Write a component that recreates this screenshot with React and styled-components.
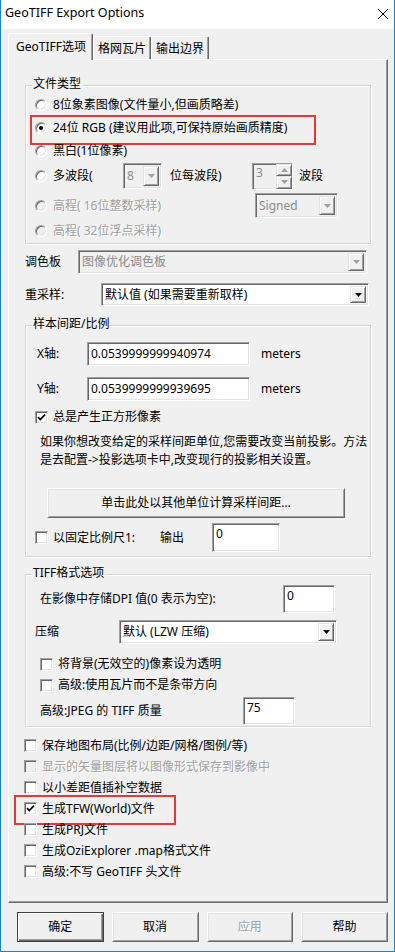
import React from 'react';
import styled, { createGlobalStyle, css } from 'styled-components';

const GlobalStyle = createGlobalStyle`
  html, body { margin: 0; padding: 0; }
  body {
    font-family: "Noto Sans", "Noto Sans CJK SC", sans-serif;
    font-size: 12px;
    color: #000;
    background: #fff;
  }
  * { box-sizing: border-box; }
`;

const sunken = css`
  border: 1px solid;
  border-color: #a0a0a0 #fff #fff #a0a0a0;
  box-shadow: inset 1px 1px 0 #696969, inset -1px -1px 0 #e3e3e3;
`;

const Window = styled.div`
  width: 395px;
  height: 952px;
  display: flex;
  flex-direction: column;
  border: 1px solid #1883d7;
  border-top: none;
  background: #f0f0f0;
`;

const TitleBar = styled.div`
  height: 29px;
  flex: none;
  background: #fff;
  display: flex;
  align-items: flex-start;
  justify-content: space-between;
  padding: 5px 5px 0 4px;
`;

const TitleText = styled.div`
  font-size: 12.5px;
  line-height: 16px;
`;

const CloseIcon = styled.svg`
  margin-top: 3px;
`;

const Body = styled.div`
  flex: 1;
  display: flex;
  flex-direction: column;
  padding: 0 6px 0 7px;
`;

const TabStrip = styled.div`
  height: 30px;
  flex: none;
  display: flex;
  align-items: flex-end;
`;

const Tab = styled.div`
  height: ${p => (p.$active ? 27 : 23)}px;
  padding: ${p => (p.$active ? '0 6px 0 7px' : '2px 4px 0 4px')};
  display: flex;
  align-items: center;
  line-height: 16px;
  background: #f0f0f0;
  border-top: 1px solid #fff;
  border-left: 1px solid #fff;
  border-right: 1px solid #696969;
  box-shadow: inset -1px 0 0 #a0a0a0;
  border-radius: 2px 2px 0 0;
  position: relative;
  z-index: ${p => (p.$active ? 1 : 0)};
  margin-bottom: ${p => (p.$active ? -1 : 0)}px;
`;

const TabPanel = styled.div`
  height: 844px;
  flex: none;
  display: flex;
  flex-direction: column;
  padding: 0 16px;
  border-top: 1px solid #fff;
  border-left: 1px solid #fff;
  border-right: 1px solid #696969;
  border-bottom: 1px solid #696969;
  box-shadow: inset -1px -1px 0 #a0a0a0;
`;

const GroupBox = styled.div`
  position: relative;
  flex: none;
  display: flex;
  flex-direction: column;
  margin-top: ${p => p.$mt}px;
  height: ${p => p.$h}px;
  padding: ${p => p.$pt}px 0 0 9px;
  border: 1px solid #d5d5d5;
  box-shadow: inset 1px 1px 0 #fff, 1px 1px 0 #fff;
`;

const GroupTitle = styled.span`
  position: absolute;
  top: -10px;
  left: 6px;
  padding: 0 1px;
  line-height: 16px;
  background: #f0f0f0;
`;

const Row = styled.div`
  position: relative;
  flex: none;
  display: flex;
  align-items: center;
  height: ${p => p.$h || 20}px;
  margin-top: ${p => p.$mt || 0}px;
  margin-left: ${p => p.$ml || 0}px;
  ${p =>
    p.$mark &&
    css`
      &::after {
        content: '';
        position: absolute;
        border: 2px solid #e5383b;
        pointer-events: none;
        ${p.$mark}
      }
    `}
`;

const Label = styled.span`
  flex: none;
  width: ${p => (p.$w ? `${p.$w}px` : 'auto')};
  margin-left: ${p => p.$ml || 0}px;
  line-height: 16px;
  white-space: nowrap;
  color: ${p => (p.$disabled ? '#a0a0a0' : '#000')};
  text-shadow: ${p => (p.$disabled ? '1px 1px 0 #fff' : 'none')};
`;

const RadioMark = styled.span`
  flex: none;
  width: 12px;
  height: 12px;
  margin-right: 6px;
  border-radius: 50%;
  border: 1px solid;
  border-color: #a0a0a0 #fff #fff #a0a0a0;
  box-shadow: inset 1px 1px 0 #696969, inset -1px -1px 0 #e3e3e3;
  background: ${p => (p.$disabled ? '#f0f0f0' : '#fff')};
  display: flex;
  align-items: center;
  justify-content: center;
  &::after {
    content: '';
    display: ${p => (p.$checked ? 'block' : 'none')};
    width: 4px;
    height: 4px;
    border-radius: 50%;
    background: #000;
  }
`;

const CheckMark = styled.span`
  flex: none;
  width: 13px;
  height: 13px;
  margin-right: 5px;
  ${sunken};
  background: ${p => (p.$disabled ? '#f0f0f0' : '#fff')};
  display: flex;
  align-items: center;
  justify-content: center;
`;

const Check = ({ checked, disabled }) => (
  <CheckMark $disabled={disabled}>
    {checked && (
      <svg width="9" height="9" viewBox="0 0 9 9">
        <polyline points="1,4.2 3.3,6.6 8,1.6" fill="none" stroke="#000" strokeWidth="1.7" />
      </svg>
    )}
  </CheckMark>
);

const TextBox = styled.div`
  flex: none;
  width: ${p => p.$w}px;
  height: ${p => p.$h}px;
  margin-left: ${p => p.$ml || 0}px;
  ${sunken};
  background: #fff;
  display: flex;
  align-items: ${p => (p.$top ? 'flex-start' : 'center')};
  padding: ${p => (p.$top ? '2px 3px 0' : '0 3px')};
  line-height: 16px;
  white-space: nowrap;
`;

const ComboBox = styled.div`
  flex: none;
  width: ${p => p.$w}px;
  height: ${p => p.$h}px;
  margin-left: ${p => p.$ml || 0}px;
  ${sunken};
  background: ${p => (p.$disabled ? '#f0f0f0' : '#fff')};
  display: flex;
  padding: 2px;
`;

const ComboText = styled.span`
  flex: 1;
  display: flex;
  align-items: center;
  padding-left: 1px;
  line-height: 16px;
  white-space: nowrap;
  overflow: hidden;
  color: ${p => (p.$disabled ? '#8c8c8c' : '#000')};
`;

const DropButton = styled.span`
  flex: none;
  width: ${p => p.$w || 16}px;
  border: 1px solid;
  border-color: #e3e3e3 #696969 #696969 #e3e3e3;
  box-shadow: inset 1px 1px 0 #fff, inset -1px -1px 0 #a0a0a0;
  background: #f0f0f0;
  display: flex;
  align-items: center;
  justify-content: center;
`;

const Triangle = ({ color = '#000', up }) => (
  <svg width="7" height="4" viewBox="0 0 7 4">
    <polygon points={up ? '0,4 7,4 3.5,0' : '0,0 7,0 3.5,4'} fill={color} />
  </svg>
);

const Combo = ({ w, h, ml, disabled, children }) => (
  <ComboBox $w={w} $h={h} $ml={ml} $disabled={disabled}>
    <ComboText $disabled={disabled}>{children}</ComboText>
    <DropButton>
      <Triangle color={disabled ? '#a0a0a0' : '#000'} />
    </DropButton>
  </ComboBox>
);

const SpinBox = styled.div`
  flex: none;
  width: 41px;
  height: 27px;
  display: flex;
  ${sunken};
  background: #f0f0f0;
`;

const SpinText = styled.span`
  flex: 1;
  padding: 1px 0 0 3px;
  line-height: 16px;
  color: #8c8c8c;
`;

const SpinButtons = styled.span`
  flex: none;
  width: 16px;
  display: flex;
  flex-direction: column;
`;

const SpinButton = styled(DropButton)`
  flex: 1;
  width: auto;
`;

const PushButton = styled.div`
  flex: none;
  height: 30px;
  width: ${p => (p.$w ? `${p.$w}px` : 'auto')};
  margin-top: ${p => p.$mt || 0}px;
  margin-left: ${p => p.$ml || 0}px;
  display: flex;
  align-items: center;
  justify-content: center;
  line-height: 16px;
  background: #f0f0f0;
  color: ${p => (p.$disabled ? '#a0a0a0' : '#000')};
  text-shadow: ${p => (p.$disabled ? '1px 1px 0 #fff' : 'none')};
  border: 1px solid;
  border-color: ${p => (p.$default ? '#404040' : '#fff #696969 #696969 #fff')};
  box-shadow: ${p =>
    p.$default
      ? 'inset 1px 1px 0 #fff, inset -1px -1px 0 #696969, inset -2px -2px 0 #a0a0a0'
      : 'inset 1px 1px 0 #e3e3e3, inset -1px -1px 0 #a0a0a0'};
`;

const Note = styled.p`
  margin: 6px 0 0 5px;
  line-height: 18px;
  white-space: nowrap;
`;

const CheckList = styled.div`
  display: flex;
  flex-direction: column;
  margin-top: 8px;
  margin-left: -1px;
`;

const ButtonRow = styled.div`
  flex: none;
  display: grid;
  grid-template-columns: repeat(4, 1fr);
  gap: 8px;
  margin-top: 9px;
  padding-left: 9px;
`;

const Radio = ({ checked, disabled, children, ...rest }) => (
  <Row {...rest}>
    <RadioMark $checked={checked} $disabled={disabled} />
    <Label $disabled={disabled}>{children}</Label>
  </Row>
);

const CheckRow = ({ checked, disabled, children, ...rest }) => (
  <Row $h={21} {...rest}>
    <Check checked={checked} disabled={disabled} />
    <Label $disabled={disabled}>{children}</Label>
  </Row>
);

export default function App() {
  return (
    <>
      <GlobalStyle />
      <Window>
        <TitleBar>
          <TitleText>GeoTIFF Export Options</TitleText>
          <CloseIcon width="12" height="12" viewBox="0 0 12 12">
            <path d="M1 1 L11 11 M11 1 L1 11" stroke="#000" strokeWidth="1" fill="none" />
          </CloseIcon>
        </TitleBar>
        <Body>
          <TabStrip>
            <Tab $active>GeoTIFF选项</Tab>
            <Tab>格网瓦片</Tab>
            <Tab>输出边界</Tab>
          </TabStrip>
          <TabPanel>
            <GroupBox $mt={25} $h={159} $pt={8}>
              <GroupTitle>文件类型</GroupTitle>
              <Radio $h={22}>8位象素图像(文件量小,但画质略差)</Radio>
              <Radio $h={23} checked $mark="top:-1px;left:-5px;width:282px;height:26px;">
                24位 RGB (建议用此项,可保持原始画质精度)
              </Radio>
              <Radio $h={23}>黑白(1位像素)</Radio>
              <Row $h={28}>
                <RadioMark />
                <Label $w={70}>多波段(</Label>
                <Combo w={39} h={26} disabled>8</Combo>
                <Label $w={82} $ml={8}>位每波段)</Label>
                <SpinBox>
                  <SpinText>3</SpinText>
                  <SpinButtons>
                    <SpinButton><Triangle color="#a0a0a0" up /></SpinButton>
                    <SpinButton><Triangle color="#a0a0a0" /></SpinButton>
                  </SpinButtons>
                </SpinBox>
                <Label $ml={6}>波段</Label>
              </Row>
              <Row $h={31}>
                <RadioMark $disabled />
                <Label $w={202} $disabled>高程( 16位整数采样)</Label>
                <Combo w={83} h={25} disabled>Signed</Combo>
              </Row>
              <Radio $h={20} disabled>高程( 32位浮点采样)</Radio>
            </GroupBox>

            <Row $h={24} $mt={6}>
              <Label $w={53}>调色板</Label>
              <Combo w={289} h={24} disabled>图像优化调色板</Combo>
            </Row>
            <Row $h={23} $mt={9}>
              <Label $w={76}>重采样:</Label>
              <Combo w={268} h={23}>默认值 (如果需要重新取样)</Combo>
            </Row>

            <GroupBox $mt={19} $h={232} $pt={16}>
              <GroupTitle>样本间距/比例</GroupTitle>
              <Row $h={24}>
                <Label $w={50} $ml={2}>X轴:</Label>
                <TextBox $w={163} $h={24}>0.0539999999940974</TextBox>
                <Label $ml={11}>meters</Label>
              </Row>
              <Row $h={24} $mt={11}>
                <Label $w={50} $ml={2}>Y轴:</Label>
                <TextBox $w={163} $h={24}>0.0539999999939695</TextBox>
                <Label $ml={11}>meters</Label>
              </Row>
              <Row $h={20} $mt={6}>
                <Check checked />
                <Label>总是产生正方形像素</Label>
              </Row>
              <Note>
                如果你想改变给定的采样间距单位,您需要改变当前投影。方法
                <br />
                是去配置-&gt;投影选项卡中,改变现行的投影相关设置。
              </Note>
              <PushButton $w={298} $mt={19} $ml={12}>单击此处以其他单位计算采样间距...</PushButton>
              <Row $h={29} $mt={5}>
                <Check />
                <Label $w={107}>以固定比例尺1:</Label>
                <Label $w={52}>输出</Label>
                <TextBox $w={68} $h={29} $top>0</TextBox>
              </Row>
            </GroupBox>

            <GroupBox $mt={17} $h={153} $pt={10}>
              <GroupTitle>TIFF格式选项</GroupTitle>
              <Row $h={28}>
                <Label $w={243} $ml={5}>在影像中存储DPI 值(0 表示为空):</Label>
                <TextBox $w={52} $h={28} $top>0</TextBox>
              </Row>
              <Row $h={24} $mt={7}>
                <Label $w={84}>压缩</Label>
                <Combo w={218} h={24}>默认 (LZW 压缩)</Combo>
              </Row>
              <Row $h={20} $mt={10} $ml={5}>
                <Check />
                <Label>将背景(无效空的)像素设为透明</Label>
              </Row>
              <Row $h={20} $mt={1} $ml={5}>
                <Check />
                <Label>高级:使用瓦片而不是条带方向</Label>
              </Row>
              <Row $h={28} $mt={2}>
                <Label $w={203} $ml={5}>高级:JPEG 的 TIFF 质量</Label>
                <TextBox $w={52} $h={28} $top>75</TextBox>
              </Row>
            </GroupBox>

            <CheckList>
              <CheckRow>保存地图布局(比例/边距/网格/图例/等)</CheckRow>
              <CheckRow disabled>显示的矢量图层将以图像形式保存到影像中</CheckRow>
              <CheckRow>以小差距值插补空数据</CheckRow>
              <CheckRow checked $mark="top:-3px;left:-10px;width:158px;height:26px;">
                生成TFW(World)文件
              </CheckRow>
              <CheckRow>生成PRJ文件</CheckRow>
              <CheckRow>生成OziExplorer .map格式文件</CheckRow>
              <CheckRow>高级:不写 GeoTIFF 头文件</CheckRow>
            </CheckList>
          </TabPanel>
          <ButtonRow>
            <PushButton $default>确定</PushButton>
            <PushButton>取消</PushButton>
            <PushButton $disabled>应用</PushButton>
            <PushButton>帮助</PushButton>
          </ButtonRow>
        </Body>
      </Window>
    </>
  );
}
